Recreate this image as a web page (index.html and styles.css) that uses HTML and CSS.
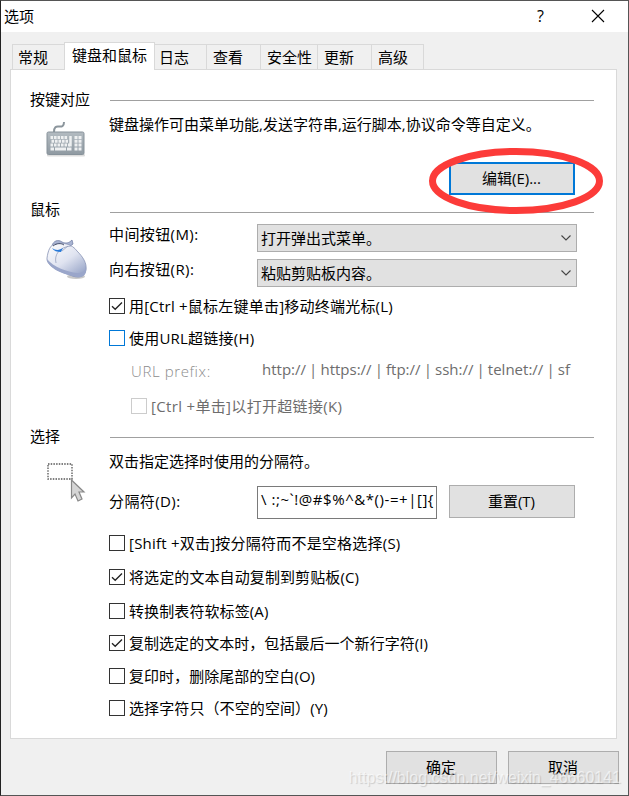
FILE: index.html
```html
<!DOCTYPE html>
<html lang="zh-cn">
<head>
    <meta charset="utf-8">
    <meta name="viewport" content="width=device-width, initial-scale=1.0">
    <title>选项</title>
    <link rel="stylesheet" href="styles.css">
</head>
<body>
    <div class="window">
        <div class="titlebar">
            <span class="title">选项</span>
            <span class="help">?</span>
            <svg class="close" width="14" height="14" viewBox="0 0 14 14"><path d="M1 1L13 13M13 1L1 13" stroke="#000" stroke-width="1.1"/></svg>
        </div>

        <div class="tabs">
            <div class="tab tab-general">常规</div>
            <div class="tab tab-keyboard active">键盘和鼠标</div>
            <div class="tab tab-log">日志</div>
            <div class="tab tab-view">查看</div>
            <div class="tab tab-security">安全性</div>
            <div class="tab tab-update">更新</div>
            <div class="tab tab-advanced">高级</div>
        </div>

        <div class="panel">
            <div class="section section-keys">
                <div class="section-head"><h2>按键对应</h2><div class="line"></div></div>
                <div class="section-body">
                    <svg class="icon icon-keyboard" width="40" height="38" viewBox="0 0 40 38">
                        <defs>
                            <linearGradient id="kb" x1="0" y1="0" x2="0" y2="1">
                                <stop offset="0" stop-color="#b3bbc1"/>
                                <stop offset="1" stop-color="#8f9aa2"/>
                            </linearGradient>
                        </defs>
                        <path d="M8 12C8 7 10 6 13 6.500C16 7 18 6 18 2" fill="none" stroke="#8b959c" stroke-width="2"/>
                        <rect x="1" y="34" width="38" height="2.500" rx="1" fill="#ddd"/>
                        <rect x="1" y="12" width="37" height="22.500" rx="1.500" fill="url(#kb)" stroke="#87929a"/>
                        <g stroke="#eef0f1" stroke-width="3" fill="none">
                            <path d="M4.500 17.500H22" stroke-dasharray="2.600 .9"/>
                            <path d="M5.500 21.300H22" stroke-dasharray="2.600 .9"/>
                            <path d="M4.500 25.100H24" stroke-dasharray="2.600 .9"/>
                            <path d="M4.500 29H8M9 29H20M21 29H25.500"/>
                            <path d="M28.500 17.500H35.500M28.500 21.300H35.500M28.500 25.100H35.500M28.500 29H35.500" stroke-dasharray="3 1"/>
                            <path d="M24.500 16V26.500" stroke-width="2.500"/>
                        </g>
                    </svg>
                    <div class="content">
                        <p>键盘操作可由菜单功能,发送字符串,运行脚本,协议命令等自定义。</p>
                        <div class="edit-box">
                            <svg class="mark" width="176" height="68" viewBox="0 0 176 68"><ellipse cx="88" cy="34" rx="83.500" ry="29.500" fill="none" stroke="#fc3b39" stroke-width="7"/></svg>
                            <button class="btn btn-edit">编辑(E)...</button>
                        </div>
                    </div>
                </div>
            </div>

            <div class="section section-mouse">
                <div class="section-head"><h2>鼠标</h2><div class="line"></div></div>
                <div class="section-body">
                    <svg class="icon icon-mouse" width="42" height="42" viewBox="0 0 42 42">
                        <defs>
                            <linearGradient id="ms" x1="0" y1="0" x2=".8" y2="1">
                                <stop offset="0" stop-color="#ffffff"/>
                                <stop offset=".55" stop-color="#dfe3f0"/>
                                <stop offset="1" stop-color="#98a5c8"/>
                            </linearGradient>
                        </defs>
                        <ellipse cx="30" cy="37.500" rx="9" ry="2.500" fill="#c9c9c9"/>
                        <path d="M6 7C7 2 12 0 16 3C20 5 23 4 26 1L27 5C24 8 19 8 15 5" fill="#a9b4d2" stroke="#7683a8" stroke-width=".8"/>
                        <path d="M1 19C2 12 4 6 9 5C17 3 26 5 31 12C37 18 41 24 40 31C39 38 32 40 24 36C15 33 0 27 1 19Z" fill="url(#ms)" stroke="#8792b4" stroke-width=".8"/>
                        <path d="M1 20C7 28 22 33 31 34C36 34 39 32 40 28C41 36 37 39 31 38C18 36 1 29 1 20Z" fill="#9aa6ca"/>
                        <path d="M10 24C8 16 13 8 25 7M16 12L22 7" fill="none" stroke="#8e99b8" stroke-width=".7"/>
                        <path d="M6 9C10 12 14 11 17 9L15 13C11 13 8 12 6 9Z" fill="#287ad9"/>
                        <path d="M7 7C11 4 15 4 18 6" fill="none" stroke="#4a536e" stroke-width="1"/>
                    </svg>
                    <div class="content">
                        <div class="field">
                            <label>中间按钮(M):</label>
                            <div class="select"><span>打开弹出式菜单。</span><svg width="12" height="8" viewBox="0 0 12 8"><path d="M1.500 1.500L6 6L10.500 1.500" fill="none" stroke="#444" stroke-width="1.100"/></svg></div>
                        </div>
                        <div class="field">
                            <label>向右按钮(R):</label>
                            <div class="select"><span>粘贴剪贴板内容。</span><svg width="12" height="8" viewBox="0 0 12 8"><path d="M1.500 1.500L6 6L10.500 1.500" fill="none" stroke="#444" stroke-width="1.100"/></svg></div>
                        </div>
                        <div class="check check-cursor">
                            <span class="box"><svg width="14" height="14" viewBox="0 0 14 14"><path d="M2 7.200L5.200 10.300L12 3.500" fill="none" stroke="#222" stroke-width="1.300"/></svg></span>
                            <span class="text">用[Ctrl +鼠标左键单击]移动终端光标(L)</span>
                        </div>
                        <div class="check check-url">
                            <span class="box hot"></span>
                            <span class="text">使用URL超链接(H)</span>
                        </div>
                        <div class="url-row">
                            <span class="url-label">URL prefix:</span>
                            <span class="url-value">http:// | https:// | ftp:// | ssh:// | telnet:// | sf</span>
                        </div>
                        <div class="check check-open disabled">
                            <span class="box"></span>
                            <span class="text">[Ctrl +单击]以打开超链接(K)</span>
                        </div>
                    </div>
                </div>
            </div>

            <div class="section section-select">
                <div class="section-head"><h2>选择</h2><div class="line"></div></div>
                <div class="section-body">
                    <svg class="icon icon-select" width="42" height="42" viewBox="0 0 42 42">
                        <rect x="2" y="2" width="24" height="15" fill="none" stroke="#555" stroke-width="1.300" stroke-dasharray="1.500 1.200"/>
                        <path d="M25.500 18L38 30H33L36 37L32 39L29 32L25.500 36Z" fill="#d5d5d5" stroke="#888" stroke-width="1.200"/>
                    </svg>
                    <div class="content">
                        <p>双击指定选择时使用的分隔符。</p>
                        <div class="separator-row">
                            <label>分隔符(D):</label>
                            <div class="input">\ :;~`!@#$%^&amp;*()-=+|[]{</div>
                            <button class="btn btn-reset">重置(T)</button>
                        </div>
                        <div class="check check-shift">
                            <span class="box"></span>
                            <span class="text">[Shift +双击]按分隔符而不是空格选择(S)</span>
                        </div>
                        <div class="check check-copy">
                            <span class="box"><svg width="14" height="14" viewBox="0 0 14 14"><path d="M2 7.200L5.200 10.300L12 3.500" fill="none" stroke="#222" stroke-width="1.300"/></svg></span>
                            <span class="text">将选定的文本自动复制到剪贴板(C)</span>
                        </div>
                        <div class="check check-tab">
                            <span class="box"></span>
                            <span class="text">转换制表符软标签(A)</span>
                        </div>
                        <div class="check check-newline">
                            <span class="box"><svg width="14" height="14" viewBox="0 0 14 14"><path d="M2 7.200L5.200 10.300L12 3.500" fill="none" stroke="#222" stroke-width="1.300"/></svg></span>
                            <span class="text">复制选定的文本时，包括最后一个新行字符(I)</span>
                        </div>
                        <div class="check check-trim">
                            <span class="box"></span>
                            <span class="text">复印时，删除尾部的空白(O)</span>
                        </div>
                        <div class="check check-chars">
                            <span class="box"></span>
                            <span class="text">选择字符只（不空的空间）(Y)</span>
                        </div>
                    </div>
                </div>
            </div>
        </div>

        <div class="footer">
            <button class="btn btn-footer">确定</button>
            <button class="btn btn-footer">取消</button>
        </div>
        <div class="watermark">https://blog.csdn.net/weixin_46660141</div>
    </div>
</body>
</html>
```
FILE: styles.css
```css
* {
    box-sizing: border-box;
}

body {
    margin: 0;
    font-family: "Open Sans", "Noto Sans CJK SC", sans-serif;
    font-size: 15px;
    line-height: 20px;
    color: #000;
}

h2, p {
    margin: 0;
    font-size: 15px;
    font-weight: normal;
    white-space: nowrap;
}

.window {
    position: relative;
    width: 629px;
    height: 796px;
    border: 1px solid #555;
    border-left-color: #222;
    background-color: #f0f0f0;
    overflow: hidden;
}

.titlebar {
    display: flex;
    align-items: center;
    height: 31px;
    padding: 0 23px 0 3px;
    background-color: #fff;
}

.title {
    flex: 1;
    padding-bottom: 2px;
}

.help {
    margin-right: 47px;
    padding-bottom: 2px;
    font-size: 16px;
}

.close {
    display: block;
    margin-bottom: 1px;
}

/* 标签页 */
.tabs {
    display: flex;
    align-items: flex-end;
    height: 37px;
    padding-left: 11px;
}

.tab {
    height: 25px;
    padding: 2px 0 0 6px;
    border: 1px solid #d9d9d9;
    border-left: none;
    border-bottom: none;
    white-space: nowrap;
}

.tab-general {
    width: 52px;
    padding-left: 5px;
    border-left: 1px solid #d9d9d9;
    border-right: none;
}

.tab.active {
    position: relative;
    z-index: 1;
    width: 91px;
    height: 28px;
    margin-bottom: -1px;
    padding-left: 7px;
    border-left: 1px solid #d9d9d9;
    background-color: #fff;
}

.tab-log {
    width: 52px;
    padding-left: 4px;
}

.tab-view {
    width: 54px;
}

.tab-security {
    width: 57px;
}

.tab-update {
    width: 54px;
}

.tab-advanced {
    width: 52px;
}

.panel {
    width: 607px;
    height: 670px;
    margin-left: 9px;
    padding: 20px 22px 0 19px;
    border: 1px solid #d9d9d9;
    background-color: #fff;
}

.section-head {
    display: flex;
    align-items: center;
    height: 20px;
}

.section-head h2 {
    width: 80px;
    padding-bottom: 2px;
}

.line {
    flex: 1;
    height: 1px;
    margin-top: 1px;
    background-color: #a0a0a0;
}

.section-body {
    display: flex;
}

.icon {
    flex: none;
    margin-left: 16px;
}

.content {
    width: 485px;
}

.section-keys {
    height: 110px;
}

.section-mouse {
    height: 227px;
}

.section-mouse .line {
    margin-top: 5px;
}

.section-mouse h2 {
    padding-bottom: 3px;
}

.icon-keyboard {
    margin-top: 10px;
    margin-right: 23px;
}

.icon-mouse {
    margin-top: 19px;
    margin-right: 21px;
}

.icon-select {
    margin-top: 15px;
    margin-right: 21px;
}

.section-keys p {
    margin-top: 4px;
}

.btn {
    padding: 0 1px 1px 0;
    border: 1px solid #adadad;
    background-color: #e1e1e1;
    color: #000;
    font: inherit;
}

.edit-box {
    position: relative;
    width: 126px;
    margin: 28px 0 0 340px;
}

.btn-edit {
    position: relative;
    width: 126px;
    height: 33px;
    border: 2px solid #0078d7;
}

.mark {
    position: absolute;
    left: -21px;
    top: -15px;
    z-index: 2;
}

.field {
    display: flex;
    height: 28px;
    margin-bottom: 7px;
}

.field:first-child {
    margin-top: 4px;
}

.field label {
    width: 148px;
    letter-spacing: 0.4px;
}

.select {
    display: flex;
    align-items: center;
    justify-content: space-between;
    width: 320px;
    height: 28px;
    padding: 0 4px 0 3px;
    border: 1px solid #adadad;
    background-color: #e1e1e1;
}

.select span {
    padding-bottom: 1px;
}

.check {
    display: flex;
    align-items: center;
    height: 20px;
    white-space: nowrap;
}

.check .text {
    padding-bottom: 1px;
    letter-spacing: 0.1px;
}

.check-cursor .text,
.check-url .text,
.check-shift .text {
    letter-spacing: 0.22px;
}

.check-open .text {
    letter-spacing: 0.33px;
}

.check-newline .text,
.check-trim .text {
    letter-spacing: 0.04px;
}

.box {
    width: 16px;
    height: 16px;
    margin-right: 4px;
    border: 1px solid #333;
    background-color: #fff;
}

.box svg {
    display: block;
}

.box.hot {
    border-color: #0078d7;
}

.check-cursor {
    margin-top: 9px;
}

.check-url {
    margin-top: 12px;
}

.url-row {
    display: flex;
    height: 20px;
    margin: 11px 0 0 22px;
}

.url-label {
    width: 131px;
    padding-top: 2px;
    color: #8c8c8c;
    font-weight: 300;
    letter-spacing: 0.6px;
}

.url-value {
    color: #6d6d6d;
    white-space: nowrap;
    word-spacing: -0.8px;
}

.check-open {
    margin: 17px 0 0 22px;
}

.disabled {
    color: #6d6d6d;
}

.disabled .box {
    border-color: #ccc;
}

.section-select p {
    margin-top: 4px;
}

.separator-row {
    display: flex;
    height: 34px;
    margin-top: 14px;
}

.separator-row label {
    width: 148px;
    padding-top: 6px;
    letter-spacing: 0.4px;
}

.input {
    width: 180px;
    height: 33px;
    margin: 1px 12px 0 0;
    padding: 2px 0 0 3px;
    border: 1px solid #7a7a7a;
    white-space: nowrap;
    letter-spacing: 0.55px;
    overflow: hidden;
}

.btn-reset {
    width: 126px;
    height: 33px;
}

.check-shift {
    margin-top: 14px;
}

.check-copy,
.check-tab {
    margin-top: 14px;
}

.check-newline,
.check-chars {
    margin-top: 12px;
}

.check-trim {
    margin-top: 13px;
}

.footer {
    display: flex;
    justify-content: flex-end;
    gap: 11px;
    padding: 12px 9px 0 0;
}

.btn-footer {
    width: 111px;
    height: 33px;
}

/* 水印 */
.watermark {
    position: absolute;
    right: 7px;
    bottom: 7px;
    font-family: "Liberation Sans", sans-serif;
    font-size: 16px;
    color: rgba(255, 255, 255, 0.6);
    text-shadow: 1px 1px 1px rgba(0, 0, 0, 0.15);
}
```
